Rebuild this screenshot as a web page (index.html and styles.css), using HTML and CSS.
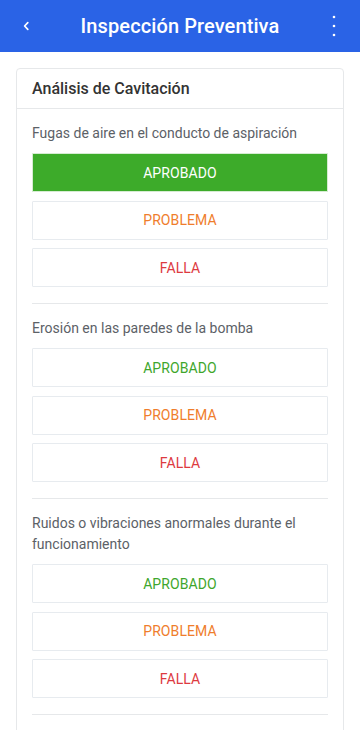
FILE: index.html
```html
<!DOCTYPE html>
<html lang="es">
<head>
<meta charset="utf-8">
<meta name="viewport" content="width=device-width, initial-scale=1">
<title>Inspección Preventiva</title>
<link rel="stylesheet" href="styles.css">
</head>
<body>
<header class="topbar">
  <button class="icon-btn back" aria-label="Atrás">
    <svg width="8" height="10" viewBox="0 0 8 10"><path d="M5.8 1.6 L2.6 5 L5.8 8.4" fill="none" stroke="#fff" stroke-width="1.7" stroke-linecap="round" stroke-linejoin="round"/></svg>
  </button>
  <h1 class="title">Inspección Preventiva</h1>
  <button class="icon-btn menu" aria-label="Más">
    <svg width="4" height="22" viewBox="0 0 4 22"><circle cx="2" cy="2" r="1.3" fill="#fff"/><circle cx="2" cy="11" r="1.3" fill="#fff"/><circle cx="2" cy="20" r="1.3" fill="#fff"/></svg>
  </button>
</header>
<main class="content">
  <section class="card">
    <div class="card-head">Análisis de Cavitación</div>
    <div class="item">
      <p class="question">Fugas de aire en el conducto de aspiración</p>
      <div class="options">
        <button class="opt ok active">APROBADO</button>
        <button class="opt warn">PROBLEMA</button>
        <button class="opt fail">FALLA</button>
      </div>
    </div>
    <div class="item">
      <p class="question">Erosión en las paredes de la bomba</p>
      <div class="options">
        <button class="opt ok">APROBADO</button>
        <button class="opt warn">PROBLEMA</button>
        <button class="opt fail">FALLA</button>
      </div>
    </div>
    <div class="item">
      <p class="question">Ruidos o vibraciones anormales durante el funcionamiento</p>
      <div class="options">
        <button class="opt ok">APROBADO</button>
        <button class="opt warn">PROBLEMA</button>
        <button class="opt fail">FALLA</button>
      </div>
    </div>
    <div class="card-rest"></div>
  </section>
</main>
</body>
</html>
```

FILE: styles.css
```css
* { box-sizing: border-box; }
html, body { margin: 0; padding: 0; }
body {
  font-family: Roboto, "Noto Sans", "Liberation Sans", sans-serif;
  background: #ffffff;
  color: #333;
  height: 730px;
  overflow: hidden;
}
.topbar {
  height: 52px;
  background: #2a63e6;
  display: flex;
  align-items: center;
  justify-content: space-between;
  padding: 0 16px;
}
.icon-btn {
  background: none;
  border: 0;
  padding: 0;
  width: 20px;
  height: 30px;
  display: flex;
  align-items: center;
  justify-content: center;
  cursor: pointer;
}
.title {
  margin: 0;
  font-size: 20px;
  font-weight: 500;
  color: #fff;
  letter-spacing: 0.1px;
}
.content {
  padding: 16px;
}
.card {
  border: 1px solid #e6e8ea;
  border-radius: 4px;
  background: #fff;
}
.card-head {
  height: 40px;
  display: flex;
  align-items: center;
  padding: 0 15px;
  font-size: 16px;
  font-weight: 500;
  color: #333;
  border-bottom: 1px solid #e6e8ea;
}
.item {
  margin: 0 15px;
  padding: 14px 0 16px;
  border-bottom: 1px solid #e6e8ea;
}
.question {
  margin: 0 0 9px;
  font-size: 14px;
  line-height: 21px;
  color: #5c6167;
}
.options {
  display: flex;
  flex-direction: column;
  gap: 8.5px;
}
.opt {
  height: 39px;
  width: 100%;
  background: #fff;
  border: 1px solid #e7ebef;
  border-radius: 1px;
  font-family: inherit;
  font-size: 14px;
  font-weight: 400;
  letter-spacing: 0.1px;
  cursor: pointer;
}
.ok { color: #3ea62c; }
.warn { color: #ef7d2c; }
.fail { color: #dd3a3f; }
.opt.ok.active {
  background: #3dab2a;
  border-color: #d6ecd2;
  color: #fff;
}
.card-rest {
  height: 80px;
}
```
